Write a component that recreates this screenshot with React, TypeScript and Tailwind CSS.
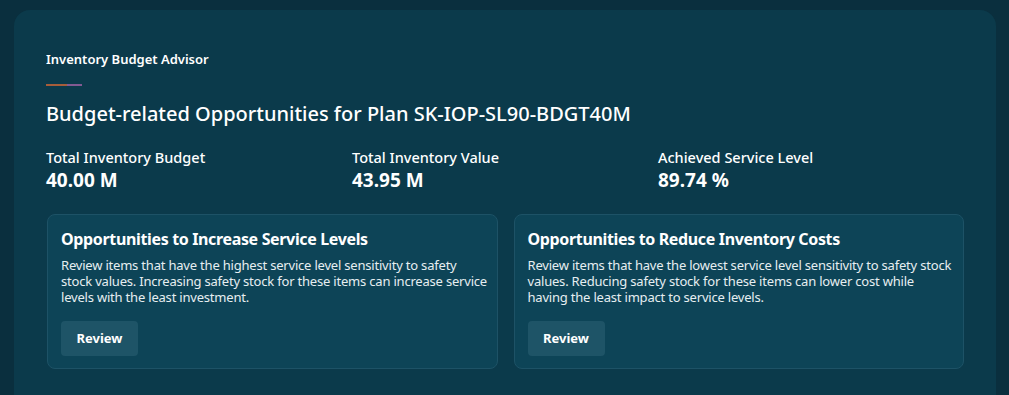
import React from "react";

function OppCard({ title, text }: { title: string; text: string }) {
  return (
    <div className="flex flex-col rounded-lg border border-[#1d5266] bg-[#0d4457] pl-[13px] pr-[9px] pt-[14px] pb-[12px]">
      <h3 className="text-[16px] font-bold leading-[20px] tracking-[-0.35px] text-white">{title}</h3>
      <p className="mt-[8px] text-[13px] leading-[16px] tracking-[-0.2px] text-[#e6eef1]">{text}</p>
      <div className="mt-[16px]">
        <button className="h-[35px] w-[77px] rounded-[4px] bg-[#1e5467] text-[13px] font-bold text-white">
          Review
        </button>
      </div>
    </div>
  );
}

function Stat({ label, value }: { label: string; value: string }) {
  return (
    <div className="flex flex-col">
      <span className="text-[14.5px] font-medium leading-[20px] text-white">{label}</span>
      <span className="text-[19px] font-bold leading-[26px] text-white">{value}</span>
    </div>
  );
}

export default function App() {
  return (
    <div
      className="h-[395px] w-[1009px] overflow-hidden bg-[#0a2f3e] pt-[10px] pl-[14px]"
      style={{ fontFamily: '"Noto Sans", sans-serif' }}
    >
      <div className="h-[400px] w-[982px] rounded-[16px] bg-[#0b3a4b] px-[32px] pt-[40px]">
        <div className="text-[13px] font-semibold leading-[18px] text-white">Inventory Budget Advisor</div>
        <div className="mt-[16px] flex h-[2px] w-[36px]">
          <div className="h-full w-[21px] bg-[#a65d3a]" />
          <div className="h-full w-[15px] bg-[#825a92]" />
        </div>
        <h1 className="mt-[15px] text-[20px] font-medium leading-[26px] text-white">
          Budget-related Opportunities for Plan SK-IOP-SL90-BDGT40M
        </h1>
        <div className="mt-[20px] grid grid-cols-3">
          <Stat label="Total Inventory Budget" value="40.00 M" />
          <Stat label="Total Inventory Value" value="43.95 M" />
          <Stat label="Achieved Service Level" value="89.74 %" />
        </div>
        <div className="mt-[21px] grid grid-cols-2 gap-[16px] pl-[1px]">
          <OppCard
            title="Opportunities to Increase Service Levels"
            text="Review items that have the highest service level sensitivity to safety stock values. Increasing safety stock for these items can increase service levels with the least investment."
          />
          <OppCard
            title="Opportunities to Reduce Inventory Costs"
            text="Review items that have the lowest service level sensitivity to safety stock values. Reducing safety stock for these items can lower cost while having the least impact to service levels."
          />
        </div>
      </div>
    </div>
  );
}
